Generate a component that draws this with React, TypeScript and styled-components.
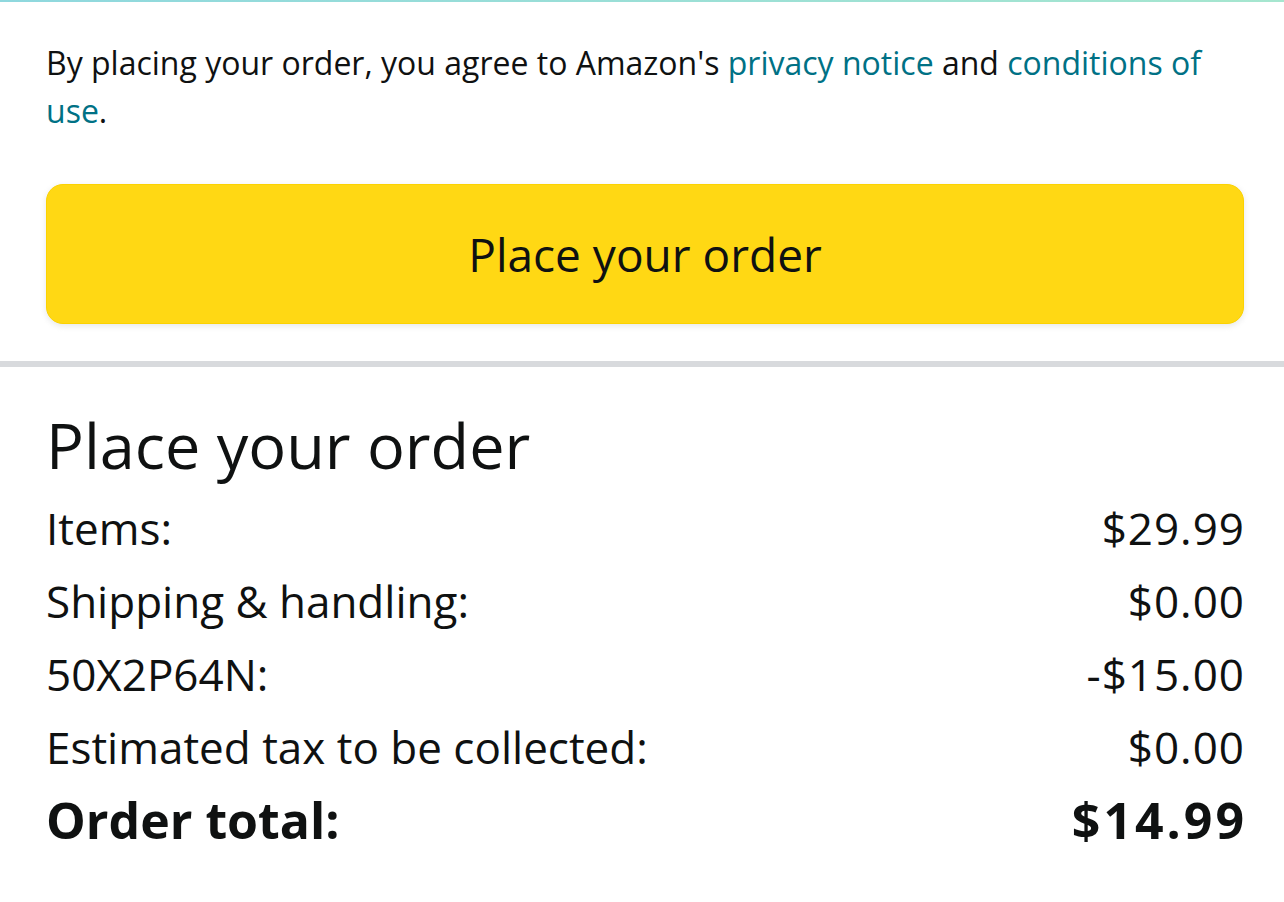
import React from "react";
import styled, { createGlobalStyle } from "styled-components";

const Global = createGlobalStyle`
  html, body { margin: 0; padding: 0; background: #ffffff; }
  body { font-family: "Open Sans", "Noto Sans", Arial, sans-serif; color: #0f1111; }
`;

const Page = styled.div`
  width: 1284px;
  height: 902px;
  overflow: hidden;
  background: #ffffff;
  display: flex;
  flex-direction: column;
`;

const TopLine = styled.div`
  height: 2px;
  background: linear-gradient(to right, #8fd8de, #a6e6cf);
`;

const Upper = styled.section`
  padding: 37px 40px 37px 46px;
  display: flex;
  flex-direction: column;
`;

const Agreement = styled.p`
  margin: 0;
  font-size: 32px;
  line-height: 48px;
  color: #0f1111;
`;

const Link = styled.a`
  color: #007185;
  text-decoration: none;
`;

const PlaceButton = styled.button`
  margin-top: 49px;
  height: 140px;
  width: 100%;
  border: 1px solid #fcd200;
  border-radius: 17px;
  background: #ffd814;
  box-shadow: 0 2px 6px rgba(213, 217, 217, 0.6);
  font-family: inherit;
  font-size: 46px;
  color: #0f1111;
  cursor: pointer;
  padding: 0;
`;

const Divider = styled.hr`
  margin: 0;
  border: none;
  height: 6px;
  background: #d8dadd;
`;

const Summary = styled.section`
  padding: 38px 40px 0 46px;
  display: flex;
  flex-direction: column;
`;

const Heading = styled.h1`
  margin: 0 0 7px 0;
  font-size: 63px;
  font-weight: 400;
  line-height: 80px;
  color: #0f1111;
`;

const Row = styled.div<{ $total?: boolean }>`
  display: flex;
  justify-content: space-between;
  align-items: baseline;
  font-size: ${(p) => (p.$total ? "50px" : "44px")};
  font-weight: ${(p) => (p.$total ? 700 : 400)};
  line-height: 73px;
  color: #0f1111;
`;

const Value = styled.span<{ $total?: boolean }>`
  letter-spacing: ${(p) => (p.$total ? "3px" : "1px")};
  margin-right: ${(p) => (p.$total ? "-3px" : "-1px")};
`;

const rows = [
  { label: "Items:", value: "$29.99" },
  { label: "Shipping & handling:", value: "$0.00" },
  { label: "50X2P64N:", value: "-$15.00" },
  { label: "Estimated tax to be collected:", value: "$0.00" },
];

export default function App() {
  return (
    <Page>
      <Global />
      <TopLine />
      <Upper>
        <Agreement>
          By placing your order, you agree to Amazon's <Link href="#">privacy notice</Link> and{" "}
          <Link href="#">conditions of use</Link>.
        </Agreement>
        <PlaceButton>Place your order</PlaceButton>
      </Upper>
      <Divider />
      <Summary>
        <Heading>Place your order</Heading>
        {rows.map((r) => (
          <Row key={r.label}>
            <span>{r.label}</span>
            <Value>{r.value}</Value>
          </Row>
        ))}
        <Row $total>
          <span>Order total:</span>
          <Value $total>$14.99</Value>
        </Row>
      </Summary>
    </Page>
  );
}
